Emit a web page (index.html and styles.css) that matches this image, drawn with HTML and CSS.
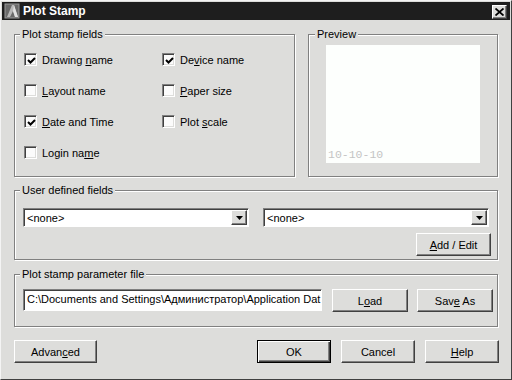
FILE: index.html
```html
<!DOCTYPE html>
<html>
<head>
<meta charset="utf-8">
<link rel="stylesheet" href="styles.css">
</head>
<body>
<div class="window">
  <div class="titlebar">
    <svg class="appicon" width="16" height="16" viewBox="0 0 16 16">
      <rect x="1" y="1" width="14" height="14" fill="#6a6a6a"/>
      <polygon points="3,14 8,2 10,2 14,14 11,14 9,8 6,14" fill="#b8b8b8"/>
      <polygon points="9,8 11,14 14,14 10,2" fill="#e0e0e0"/>
      <rect x="1" y="1" width="14" height="14" fill="none" stroke="#9a9a9a"/>
    </svg>
    <span class="title">Plot Stamp</span>
    <span class="close">
      <svg width="9" height="8" viewBox="0 0 9 8"><path d="M0.5 0.5 L8.5 7.5 M8.5 0.5 L0.5 7.5" stroke="#000" stroke-width="1.8"/></svg>
    </span>
  </div>
  <div class="content">
    <div class="row1">
      <div class="group fields">
        <span class="legend">Plot stamp fields</span>
        <div class="checkgrid">
          <label class="check"><span class="box"><svg width="9" height="9" viewBox="0 0 9 9"><path d="M1 4 L3.5 6.5 L8 2" fill="none" stroke="#000" stroke-width="2"/></svg></span><span>Drawing <u>n</u>ame</span></label>
          <label class="check"><span class="box"><svg width="9" height="9" viewBox="0 0 9 9"><path d="M1 4 L3.5 6.5 L8 2" fill="none" stroke="#000" stroke-width="2"/></svg></span><span>De<u>v</u>ice name</span></label>
          <label class="check"><span class="box"></span><span><u>L</u>ayout name</span></label>
          <label class="check"><span class="box"></span><span><u>P</u>aper size</span></label>
          <label class="check"><span class="box"><svg width="9" height="9" viewBox="0 0 9 9"><path d="M1 4 L3.5 6.5 L8 2" fill="none" stroke="#000" stroke-width="2"/></svg></span><span><u>D</u>ate and Time</span></label>
          <label class="check"><span class="box"></span><span>Plot <u>s</u>cale</span></label>
          <label class="check"><span class="box"></span><span>Login na<u>m</u>e</span></label>
        </div>
      </div>
      <div class="group preview">
        <span class="legend">Preview</span>
        <div class="canvas"><span class="stamp">10-10-10</span></div>
      </div>
    </div>

    <div class="group user">
      <span class="legend">User defined fields</span>
      <div class="combos">
        <div class="combo"><span class="combotext">&lt;none&gt;</span><span class="drop"><svg width="7" height="4" viewBox="0 0 7 4"><polygon points="0,0 7,0 3.5,4" fill="#000"/></svg></span></div>
        <div class="combo"><span class="combotext">&lt;none&gt;</span><span class="drop"><svg width="7" height="4" viewBox="0 0 7 4"><polygon points="0,0 7,0 3.5,4" fill="#000"/></svg></span></div>
      </div>
      <div class="addrow">
        <button class="btn addedit"><span><u>A</u>dd / Edit</span></button>
      </div>
    </div>

    <div class="group param">
      <span class="legend">Plot stamp parameter file</span>
      <div class="paramrow">
        <div class="field">C:\Documents and Settings\Администратор\Application Dat</div>
        <button class="btn load"><span>L<u>o</u>ad</span></button>
        <button class="btn saveas"><span>Sav<u>e</u> As</span></button>
      </div>
    </div>

    <div class="bottom">
      <button class="btn advanced"><span>Advan<u>c</u>ed</span></button>
      <div class="spacer"></div>
      <button class="btn ok default"><span>OK</span></button>
      <button class="btn"><span>Cancel</span></button>
      <button class="btn help"><span><u>H</u>elp</span></button>
    </div>
  </div>
</div>
</body>
</html>
```

FILE: styles.css
```css
* { box-sizing: border-box; }
html, body { margin: 0; padding: 0; }
body {
  font-family: "Liberation Sans", Arial, sans-serif;
  font-size: 11px;
  color: #000;
  background: #dddddb;
}
.window {
  width: 512px;
  height: 380px;
  background: #dddddb;
  border: 1px solid;
  border-color: #f4f4f4 #404040 #404040 #f4f4f4;
  padding: 1px;
  overflow: hidden;
}
.titlebar {
  height: 18px;
  background: #1e1e1e;
  display: flex;
  align-items: center;
}
.appicon { margin-left: 2px; margin-right: 3px; flex-shrink: 0; }
.title {
  color: #fff;
  font-weight: bold;
  font-size: 12px;
  flex: 1;
  line-height: 18px;
}
.close {
  width: 15px;
  height: 14px;
  margin-right: 3px;
  margin-top: 1px;
  background: #dddddb;
  border: 1px solid;
  border-color: #fff #404040 #404040 #fff;
  box-shadow: inset -1px -1px 0 #808080;
  display: flex;
  align-items: center;
  justify-content: center;
}
.content {
  padding: 14px 12px 0 12px;
  display: flex;
  flex-direction: column;
}
.row1 { display: flex; gap: 13px; }
.group {
  border: 1px solid #808080;
  box-shadow: inset 1px 1px 0 #fff, 1px 1px 0 #fff;
  display: flex;
  flex-direction: column;
}
.legend {
  align-self: flex-start;
  line-height: 13px;
  padding: 0 2px;
  background: #dddddb;
  margin-top: -7px;
  margin-bottom: -6px;
}
.fields {
  width: 281px;
  height: 143px;
  padding: 0 0 0 9px;
}
.fields .legend { margin-left: -4px; }
.checkgrid {
  margin-top: 9px;
  display: grid;
  grid-template-columns: 138px auto;
  grid-auto-rows: 31px;
}
.check {
  display: flex;
  align-items: center;
  gap: 5px;
}
.box {
  width: 13px;
  height: 13px;
  background: #fbfbfb;
  border: 1px solid;
  border-color: #808080 #fff #fff #808080;
  box-shadow: inset 1px 1px 0 #404040, inset -1px -1px 0 #dddddb;
  display: flex;
  align-items: center;
  justify-content: center;
  flex-shrink: 0;
}
.box svg { margin-left: 1px; margin-top: 1px; }
.preview {
  width: 190px;
  height: 143px;
  padding: 0 0 0 17px;
}
.preview .legend { margin-left: -11px; }
.canvas {
  margin-top: 10px;
  width: 154px;
  height: 118px;
  background: #fdfffd;
  display: flex;
  align-items: flex-end;
  padding: 0 0 2px 2px;
}
.stamp {
  font-family: "Liberation Mono", "Courier New", monospace;
  font-size: 11.5px;
  line-height: 13px;
  color: #c4c4c4;
}
.user {
  margin-top: 13px;
  height: 70px;
  padding: 0 8px 0 8px;
}
.user .legend, .param .legend { margin-left: -3px; }
.combos {
  margin-top: 17px;
  display: flex;
  gap: 14px;
}
.combo {
  width: 227px;
  height: 19px;
  background: #fff;
  border: 1px solid;
  border-color: #808080 #fff #fff #808080;
  box-shadow: inset 1px 1px 0 #404040;
  display: flex;
  align-items: center;
  padding: 1px 1px 0 3px;
}
.combotext { flex: 1; line-height: 15px; }
.drop {
  width: 16px;
  height: 15px;
  background: #dddddb;
  border: 1px solid;
  border-color: #fff #404040 #404040 #fff;
  box-shadow: inset -1px -1px 0 #808080;
  display: flex;
  align-items: center;
  justify-content: center;
  margin-top: -1px;
}
.addrow {
  margin-top: 6px;
  display: flex;
  justify-content: flex-end;
  margin-right: -2px;
}
.btn {
  font-family: "Liberation Sans", Arial, sans-serif;
  font-size: 11px;
  color: #000;
  background: #dddddb;
  border: 1px solid;
  border-color: #fff #404040 #404040 #fff;
  box-shadow: inset -1px -1px 0 #808080;
  height: 23px;
  width: 74px;
  padding: 0;
  flex-shrink: 0;
  display: flex;
  align-items: center;
  justify-content: center;
}
.btn span { white-space: nowrap; }
.btn.default {
  border: 1px solid #000;
  box-shadow: inset 1px 1px 0 #fff, inset -1px -1px 0 #404040, inset -2px -2px 0 #808080;
}
.addedit { width: 75px; }
.param {
  margin-top: 14px;
  height: 53px;
  padding: 0 8px 0 8px;
}
.paramrow {
  margin-top: 14px;
  display: flex;
  align-items: flex-start;
}
.field {
  width: 299px;
  height: 22px;
  flex-shrink: 0;
  background: #fff;
  border: 1px solid;
  border-color: #808080 #fff #fff #808080;
  box-shadow: inset 1px 1px 0 #404040;
  white-space: nowrap;
  overflow: hidden;
  line-height: 19px;
  padding: 0 0 0 3px;
}
.load { width: 76px; margin-left: 10px; }
.saveas { width: 76px; margin-left: 9px; }
.bottom {
  margin-top: 13px;
  display: flex;
  gap: 10px;
  margin-right: -1px;
}
.advanced { width: 83px; }
.spacer { flex: 1; }
```
